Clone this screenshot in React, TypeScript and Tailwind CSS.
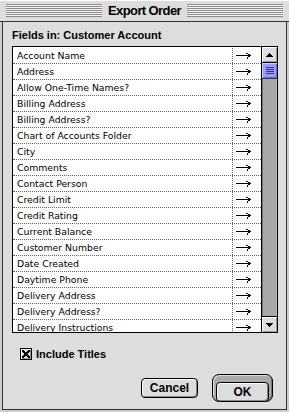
import React from 'react';

const fields = [
  'Account Name',
  'Address',
  'Allow One-Time Names?',
  'Billing Address',
  'Billing Address?',
  'Chart of Accounts Folder',
  'City',
  'Comments',
  'Contact Person',
  'Credit Limit',
  'Credit Rating',
  'Current Balance',
  'Customer Number',
  'Date Created',
  'Daytime Phone',
  'Delivery Address',
  'Delivery Address?',
  'Delivery Instructions',
];

// bold "system" font stand-in
const sysFont = "font-['Liberation_Sans',Arial,sans-serif] font-bold";

const Arrow: React.FC = () => (
  <svg width="16" height="7" viewBox="0 0 16 7" shapeRendering="crispEdges">
    <rect x="0" y="3" width="15" height="1" fill="#000" />
    <rect x="10" y="1" width="2" height="1" fill="#000" />
    <rect x="12" y="2" width="2" height="1" fill="#000" />
    <rect x="12" y="4" width="2" height="1" fill="#000" />
    <rect x="11" y="5" width="1" height="2" fill="#000" />
  </svg>
);

const ScrollArrow: React.FC<{ down?: boolean }> = ({ down }) => (
  <div
    className={
      down
        ? 'h-[16px] flex items-center justify-center bg-[#dddddd] border-t border-black shadow-[inset_1px_1px_0_#ffffff,inset_-1px_-1px_0_#999999]'
        : 'h-[16px] flex items-center justify-center bg-[#dddddd] border-b border-black shadow-[inset_1px_1px_0_#ffffff,inset_-1px_-1px_0_#999999]'
    }
  >
    <svg width="7" height="4" viewBox="0 0 7 4" shapeRendering="crispEdges">
      {down ? <path d="M0 0H7L3.5 4Z" fill="#000" /> : <path d="M0 4H7L3.5 0Z" fill="#000" />}
    </svg>
  </div>
);

const FieldRow: React.FC<{ name: string }> = ({ name }) => (
  <div className="flex h-[16px] shrink-0 border-b border-dotted border-[#666666]">
    <div className="w-[220px] shrink-0 border-r border-dotted border-[#666666] pl-[4px] flex items-center font-['DejaVu_Sans',Verdana,sans-serif] text-[9.3px] leading-[15px] text-black whitespace-nowrap overflow-hidden">
      {name}
    </div>
    <div className="flex-1 flex items-center pl-[3px]">
      <Arrow />
    </div>
  </div>
);

const Stripes: React.FC = () => (
  <div className="flex-1 h-[13px] bg-[repeating-linear-gradient(to_bottom,#8a8a8a_0px,#8a8a8a_1px,#f4f4f4_1px,#f4f4f4_2px)]" />
);

export default function App() {
  return (
    <div className="w-[289px] h-[412px] bg-[#cccccc] flex flex-col px-[2px] pb-[2px] overflow-hidden">
      {/* title bar */}
      <div className="h-[22px] shrink-0 -mx-[2px] flex items-center px-[6px] bg-[#dddddd] border-b border-[#333333] shadow-[inset_0_1px_0_#ffffff]">
        <Stripes />
        <div className={`${sysFont} px-[6px] text-[13px] leading-[14px] tracking-[-0.6px] text-black`}>Export Order</div>
        <Stripes />
      </div>

      {/* content */}
      <div className="flex-1 flex flex-col bg-[#dddddd] border-x border-b border-[#333333] pt-[6px] pl-[9px] pr-[8px]">
        <div className={`${sysFont} h-[14px] text-[11px] leading-[14px] text-black whitespace-nowrap`}>
          Fields in: Customer Account
        </div>

        {/* list */}
        <div className="mt-[4px] w-[266px] h-[287px] border border-black bg-white flex">
          <div className="w-[248px] pt-[1px] flex flex-col overflow-hidden">
            {fields.map((f) => (
              <FieldRow key={f} name={f} />
            ))}
          </div>
          <div className="w-[16px] border-l border-black flex flex-col">
            <ScrollArrow />
            <div className="h-[16px] shrink-0 bg-[#9c9cff] border-b border-[#303080] shadow-[inset_1px_1px_0_#ccccff,inset_-1px_-1px_0_#6666cc] flex flex-col items-center justify-center gap-[1px]">
              <div className="w-[8px] h-[1px] bg-[#303080]" />
              <div className="w-[8px] h-[1px] bg-[#303080]" />
              <div className="w-[8px] h-[1px] bg-[#303080]" />
              <div className="w-[8px] h-[1px] bg-[#303080]" />
            </div>
            <div className="flex-1 bg-[#a8a8a8] shadow-[inset_1px_0_0_#777777,inset_-1px_0_0_#bbbbbb]" />
            <ScrollArrow down />
          </div>
        </div>

        {/* include titles */}
        <div className="mt-[15px] ml-[8px] flex items-center gap-[4px] h-[12px]">
          <div className="w-[12px] h-[12px] border border-black bg-[#dddddd] shadow-[inset_1px_1px_0_#ffffff,inset_-1px_-1px_0_#999999] flex items-center justify-center">
            <svg width="8" height="8" viewBox="0 0 8 8" shapeRendering="crispEdges">
              <path d="M0 0L8 8M8 0L0 8" stroke="#000" strokeWidth="1.5" />
            </svg>
          </div>
          <span className={`${sysFont} text-[11px] leading-[12px] text-black`}>Include Titles</span>
        </div>

        {/* buttons */}
        <div className="mt-[14px] flex items-center justify-end gap-[14px] pr-[5px]">
          <button className={`${sysFont} w-[57px] h-[20px] rounded-[4px] border border-black bg-[#dddddd] shadow-[inset_1px_1px_0_#ffffff,inset_-1px_-1px_0_#888888] text-[12px] leading-[18px] text-black`}>
            Cancel
          </button>
          <div className="w-[61px] h-[28px] rounded-[7px] border border-black bg-[#aaaaaa] shadow-[inset_1px_1px_0_#dddddd,inset_-1px_-1px_0_#777777] p-[3px]">
            <button className={`${sysFont} w-full h-full rounded-[4px] border border-black bg-[#dddddd] shadow-[inset_1px_1px_0_#ffffff,inset_-1px_-1px_0_#888888] text-[12px] leading-[18px] text-black`}>
              OK
            </button>
          </div>
        </div>
      </div>
    </div>
  );
}
